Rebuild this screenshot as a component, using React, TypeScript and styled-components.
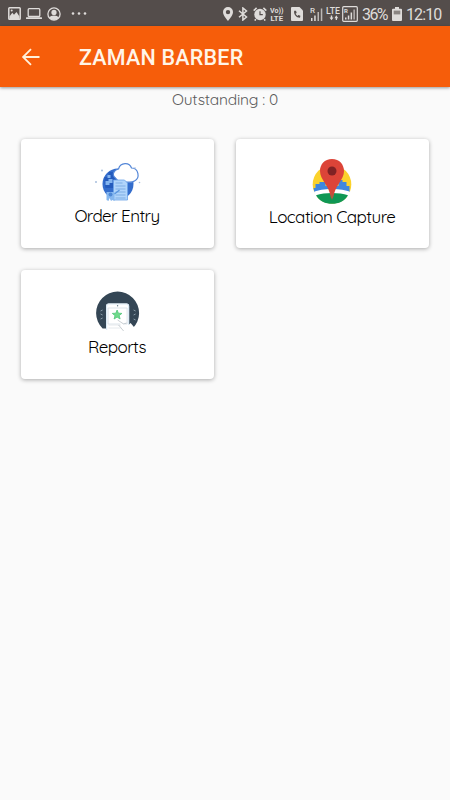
import React from 'react';
import styled, { createGlobalStyle } from 'styled-components';

const GlobalStyle = createGlobalStyle`
  * { box-sizing: border-box; }
  body { margin: 0; background: #fafafa; }
  svg { display: block; flex: none; }
`;

const Screen = styled.div`
  width: 450px;
  height: 800px;
  overflow: hidden;
  background: #fafafa;
  font-family: Quicksand, Lato, sans-serif;
`;

const StatusBar = styled.div`
  display: flex;
  justify-content: space-between;
  height: 26px;
  padding: 0 9px 0 8px;
  background: #544d4b;
  color: #dfdcda;
  font-family: Roboto, sans-serif;
`;

const StatusGroup = styled.div`
  display: flex;
  align-items: center;
  height: 27px;
`;

const StatusItem = styled.div<{ $width: number; $gap?: number }>`
  flex: none;
  width: ${(p) => p.$width}px;
  margin-left: ${(p) => p.$gap ?? 0}px;
`;

const StatusText = styled(StatusItem)<{ $spacing?: number }>`
  font-size: 16px;
  line-height: 28px;
  height: 26px;
  white-space: nowrap;
  letter-spacing: ${(p) => p.$spacing ?? 0}px;
`;

const AppBar = styled.header`
  display: flex;
  align-items: center;
  position: relative;
  height: 61px;
  padding: 1px 21px 0;
  background: #f65d0a;
  box-shadow: 0 1px 3px rgba(0, 0, 0, 0.4);
`;

const BackButton = styled.button`
  width: 20px;
  height: 20px;
  margin-right: 38px;
  padding: 0;
  border: 0;
  background: none;
`;

const Title = styled.h1`
  margin: 0;
  padding-top: 2px;
  color: #fff5e8;
  font: 500 21.5px/28px Roboto, sans-serif;
  letter-spacing: 0.22px;
  white-space: nowrap;
`;

const Outstanding = styled.div`
  height: 25px;
  color: #5a5a5a;
  font-size: 15.5px;
  line-height: 25px;
  letter-spacing: -0.2px;
  text-align: center;
`;

const CardGrid = styled.main`
  display: grid;
  grid-template-columns: 193px 193px;
  grid-auto-rows: 109px;
  gap: 22px;
  padding: 27px 21px;
`;

const Card = styled.section`
  display: flex;
  flex-direction: column;
  align-items: center;
  padding-top: 19px;
  border-radius: 4px;
  background: #fff;
  box-shadow: 0 1px 4px rgba(0, 0, 0, 0.32);
`;

const CardLabel = styled.div<{ $spacing: number; $drop?: number }>`
  margin-top: ${(p) => p.$drop ?? 1}px;
  padding-right: 1px;
  color: #000;
  font-size: 17px;
  line-height: 24px;
  letter-spacing: ${(p) => p.$spacing}px;
  white-space: nowrap;
`;

const fg = '#dfdcda';

const GalleryIcon = () => (
  <svg width="13" height="13" viewBox="0 0 13 13">
    <rect x="0.8" y="0.8" width="11.4" height="11.4" rx="0.8" fill="none" stroke={fg} strokeWidth="1.5" />
    <path d="M1.5 9.5 4.3 5.7 6 7.8 8.5 5 11.5 9.5V12h-10z" fill={fg} />
    <circle cx="3.7" cy="3.5" r="1" fill={fg} />
  </svg>
);

const LaptopIcon = () => (
  <svg width="16" height="13" viewBox="0 0 16 13">
    <rect x="2.2" y="1.7" width="11.6" height="7.8" rx="1" fill="none" stroke={fg} strokeWidth="1.3" />
    <rect y="10.3" width="16" height="1.8" rx="0.5" fill={fg} />
  </svg>
);

const PersonIcon = () => (
  <svg width="14" height="14" viewBox="0 0 14 14">
    <circle cx="7" cy="7" r="6.1" fill="none" stroke={fg} strokeWidth="1.3" />
    <circle cx="7" cy="5.4" r="2.6" fill={fg} />
    <path d="M2.4 11c.5-2 2.4-2.6 4.6-2.6s4.1.6 4.6 2.6C9.3 13.6 4.7 13.6 2.4 11z" fill={fg} />
  </svg>
);

const DotsIcon = () => (
  <svg width="16" height="4" viewBox="0 0 16 4" fill={fg}>
    <circle cx="2" cy="1.5" r="1.3" />
    <circle cx="8" cy="1.5" r="1.3" />
    <circle cx="14" cy="1.5" r="1.3" />
  </svg>
);

const PlaceIcon = () => (
  <svg width="10" height="14" viewBox="0 0 10 14">
    <path fillRule="evenodd" d="M5 0a5 5 0 0 1 5 5c0 3.5-5 9-5 9S0 8.5 0 5a5 5 0 0 1 5-5zm0 2.9a2.2 2.2 0 1 0 0 4.4 2.2 2.2 0 0 0 0-4.4z" fill={fg} />
  </svg>
);

const BluetoothIcon = () => (
  <svg width="10" height="14" viewBox="0 0 10 14">
    <path d="M1 3.7 8.5 10 4.9 13V1L8.5 4 1 10.3" fill="none" stroke={fg} strokeWidth="1.5" />
  </svg>
);

const AlarmIcon = () => (
  <svg width="14" height="14" viewBox="0 0 14 14">
    <circle cx="7" cy="7.5" r="5.7" fill={fg} />
    <path d="M.7 3.6 3.6.9M13.3 3.6 10.4.9M2.9 12.2l-1.2 1.4M11.1 12.2l1.2 1.4" stroke={fg} strokeWidth="1.5" />
    <path d="M7 4.2v3.5h2.8" fill="none" stroke="#544d4b" strokeWidth="1.2" />
  </svg>
);

const VolteIcon = () => (
  <svg width="14" height="16" viewBox="0 0 14 16" fill={fg} fontFamily="Roboto, sans-serif" fontWeight="700">
    <text x="0" y="6.5" fontSize="6.5" textLength="13.5" lengthAdjust="spacingAndGlyphs">Vo))</text>
    <text x="0.5" y="14.5" fontSize="7.5" textLength="12.5" lengthAdjust="spacingAndGlyphs">LTE</text>
  </svg>
);

const CallIcon = () => (
  <svg width="12" height="14" viewBox="0 0 12 14">
    <path d="M1 0h7.5L12 3.5V13a1 1 0 0 1-1 1H1a1 1 0 0 1-1-1V1a1 1 0 0 1 1-1z" fill={fg} />
    <path d="M3.2 3.7c-.8 3.5 2 7 5.800 7l.4-1.900-2-.7-.9.800C5.500 8.400 4.900 7.500 4.700 6.600l1-.7-.7-2.200z" fill="#544d4b" />
  </svg>
);

const SignalIcon = () => (
  <svg width="13" height="14" viewBox="0 0 13 14" fill={fg}>
    <text x="0" y="6" fontSize="8" fontFamily="Roboto, sans-serif" fontWeight="500">R</text>
    <rect x="1" y="11" width="1.5" height="3" />
    <rect x="4.2" y="8.5" width="1.5" height="5.5" />
    <rect x="7.5" y="5" width="1.5" height="9" opacity="0.75" />
    <rect x="10.8" y="1.5" width="1.5" height="12.5" opacity="0.75" />
  </svg>
);

const LteIcon = () => (
  <svg width="14" height="14" viewBox="0 0 14 14" fill={fg}>
    <text x="0" y="6.5" fontSize="9" fontFamily="Roboto, sans-serif" fontWeight="500" textLength="14" lengthAdjust="spacingAndGlyphs">LTE</text>
    <path d="M3.5 10.5h1.3V8.500h1.400v2h1.300l-2 2.700zM8.500 11.200l1.800-2.900 1.900 2.900h-1.200v1.800H9.700v-1.800z" />
  </svg>
);

const BoxedSignalIcon = () => (
  <svg width="16" height="16" viewBox="0 0 16 16" fill={fg}>
    <rect x="0.7" y="0.7" width="14.6" height="14.6" rx="1" fill="none" stroke={fg} strokeWidth="1.2" />
    <text x="2" y="6.5" fontSize="6" fontFamily="Roboto, sans-serif" fontWeight="700">R</text>
    <rect x="3" y="11.5" width="1.5" height="2" />
    <rect x="5.8" y="9.5" width="1.5" height="4" />
    <rect x="8.6" y="6.5" width="1.5" height="7" />
    <rect x="11.4" y="3.5" width="1.5" height="10" opacity="0.7" />
  </svg>
);

const BatteryIcon = () => (
  <svg width="10" height="14" viewBox="0 0 10 14">
    <path d="M3 0h4v1.7h2a1 1 0 0 1 1 1V13a1 1 0 0 1-1 1H1a1 1 0 0 1-1-1V2.700a1 1 0 0 1 1-1h2z" fill={fg} />
    <rect x="1.7" y="3.6" width="6.6" height="3.8" fill="#8b8582" />
  </svg>
);

const BackIcon = () => (
  <svg width="20" height="20" viewBox="0 0 20 20" fill="none" stroke="#fff1dc" strokeWidth="1.8">
    <path d="M18.5 10H2.200M10 2.100 2.100 10l7.900 7.900" />
  </svg>
);

const OrderIcon = () => (
  <svg width="48" height="45" viewBox="0.5 0 48 45">
    <circle cx="24.5" cy="26" r="15.5" fill="#346dcc" />
    <path d="M11 25v-6h4v-5h9v16H12z" fill="#245bbd" />
    <path d="M12 23h3v-2h4v4h-3v2h-4zM14 17h3v3h-3z" fill="#83b4ef" />
    <path d="M22 20c-4-3-2-8 3-9 2-7 11-7 13-1 7 0 9 10 3 13-3 2-6 1-9 1-5 0-7 0-10-4z" fill="#fff" stroke="#5487d8" strokeWidth="1.2" />
    <path d="M20 22h11l3 3v17H20z" fill="#b1d5fb" stroke="#6ca3e7" strokeWidth="0.8" />
    <path d="M22 25h7M22 28h10M22 31h10M22 34h10M22 37h10M22 40h10" stroke="#71a4df" strokeWidth="0.8" />
    <path d="M13 34h8v9l-2-1-1.500 1-1.500-3-1 3-2-1z" fill="#85b7ef" />
    <circle cx="17" cy="36.5" r="2" fill="#4d88d6" />
    <path d="m21 36 5-4" stroke="#5794df" strokeWidth="1.2" />
    <g fill="#a7bedc"><circle cx="8.5" cy="12.5" r="1" /><circle cx="2.5" cy="24" r="1" /><circle cx="41.5" cy="10" r="0.8" /><circle cx="46" cy="24.5" r="0.8" /></g>
  </svg>
);

const LocationIcon = () => (
  <svg width="42" height="46" viewBox="0.5 0 42 46">
    <circle cx="20.5" cy="26.5" r="19.3" fill="#fbd22b" />
    <path d="M2 30h2v-4h4v-2h6v4h13v-6h4v2h4v4h3v7c-5-4-28-5-35 0z" fill="#3f87df" />
    <path d="M2.300 34c8-4 28-4 36.500 0l-2 4H4z" fill="#fff" />
    <path d="M4.500 37.200c9-3 23-3 32 0-6 11.500-26 11.500-32 0z" fill="#109754" />
    <path d="M20.500 1C13 1 8.500 6.500 8.500 13c0 9 9 14 11 27h2c2-13 11-18 11-27C32.500 6.500 28 1 20.500 1z" fill="#dc4438" />
    <circle cx="20.5" cy="13" r="4.5" fill="#802224" />
    <path d="m20.500 31 .8 9-.8 2-.8-2z" fill="#9c6540" />
  </svg>
);

const ReportsIcon = () => (
  <svg width="44" height="44" viewBox="0.4 0 44 44">
    <path d="M7 39.500A21.500 21.500 0 1 1 37 39.500z" fill="#344655" />
    <path d="M10.500 42V17q0-2.500 2.500-2.500h18q2.500 0 2.500 2.500v21l5 2v3h-28z" fill="#fff" />
    <path d="M11 41V17.200q0-2.200 2.200-2.200h17.600q2.200 0 2.200 2.200V36" fill="none" stroke="#dcebf6" strokeWidth="1.2" />
    <path d="M12.500 19h19v16h-19z" fill="#fff" stroke="#cfdae2" strokeWidth="0.7" />
    <path d="M13 36h12M13 39h12" stroke="#dfe4e9" strokeWidth="0.8" />
    <circle cx="22" cy="16.800" r="0.7" fill="#657b88" />
    <path d="m21.500 21 1.300 3.200 3.500.2-2.700 2.200.9 3.400-3-1.900-3 1.900.9-3.400-2.700-2.200 3.500-.2z" fill="#70db8a" stroke="#4fc579" strokeWidth="0.8" />
    <path d="m23 30 5 5 4 2 3-3 5 6v4H28z" fill="#fff" />
    <path d="m22 31 6 4M23 36l5 6M28 35l3-1" fill="none" stroke="#a4afb6" strokeWidth="0.6" />
    <path d="m5 22 2-1M5 25l2 1M5 30l2-1M38 21l2 1M38 26l2-1M38 30l2 1" stroke="#9db0bb" strokeWidth="0.8" />
  </svg>
);

export default function App() {
  return (
    <Screen>
      <GlobalStyle />
      <StatusBar>
        <StatusGroup>
          <StatusItem $width={13}><GalleryIcon /></StatusItem>
          <StatusItem $width={16} $gap={5}><LaptopIcon /></StatusItem>
          <StatusItem $width={14} $gap={5}><PersonIcon /></StatusItem>
          <StatusItem $width={16} $gap={10}><DotsIcon /></StatusItem>
        </StatusGroup>
        <StatusGroup>
          <StatusItem $width={10}><PlaceIcon /></StatusItem>
          <StatusItem $width={10} $gap={5}><BluetoothIcon /></StatusItem>
          <StatusItem $width={14} $gap={5}><AlarmIcon /></StatusItem>
          <StatusItem $width={14} $gap={3}><VolteIcon /></StatusItem>
          <StatusItem $width={12} $gap={7}><CallIcon /></StatusItem>
          <StatusItem $width={13} $gap={7}><SignalIcon /></StatusItem>
          <StatusItem $width={14} $gap={3}><LteIcon /></StatusItem>
          <StatusItem $width={16} $gap={2}><BoxedSignalIcon /></StatusItem>
          <StatusText $width={26} $gap={4} $spacing={-1.6}>36%</StatusText>
          <StatusItem $width={10} $gap={4}><BatteryIcon /></StatusItem>
          <StatusText $width={35} $gap={4} $spacing={-0.9}>12:10</StatusText>
        </StatusGroup>
      </StatusBar>
      <AppBar>
        <BackButton aria-label="Back"><BackIcon /></BackButton>
        <Title>ZAMAN BARBER</Title>
      </AppBar>
      <Outstanding>Outstanding : 0</Outstanding>
      <CardGrid>
        <Card><OrderIcon /><CardLabel $spacing={-0.6}>Order Entry</CardLabel></Card>
        <Card><LocationIcon /><CardLabel $spacing={-0.55}>Location Capture</CardLabel></Card>
        <Card><ReportsIcon /><CardLabel $spacing={-0.6} $drop={2}>Reports</CardLabel></Card>
      </CardGrid>
    </Screen>
  );
}
